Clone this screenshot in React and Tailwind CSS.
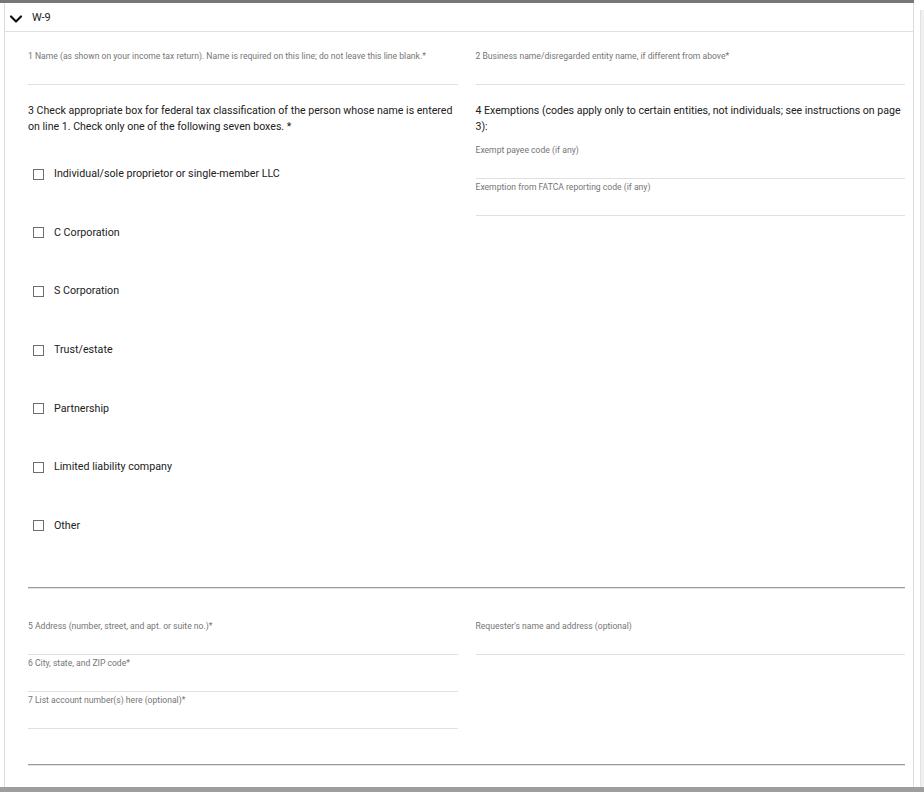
import React from "react";
import { ChevronDown } from "lucide-react";

function Field({ label }) {
  return (
    <div className="pt-[3px]">
      <div className="text-[8.6px] leading-[10px] text-[#757575] whitespace-nowrap">{label}</div>
      <div className="h-[24px] border-b border-[#e0e0e0]" />
    </div>
  );
}

function Option({ label }) {
  return (
    <div className="h-[58.6px] flex items-center pl-[5px]">
      <div className="w-[11px] h-[11px] border-[1.5px] border-[#6e6e6e] bg-white" />
      <span className="ml-[10px] text-[10.7px] leading-[16px] text-[#212121]">{label}</span>
    </div>
  );
}

function Divider() {
  return (
    <div className="h-[2px] border-t border-[#9a9a9a] border-b border-b-[#e4e4e4]" />
  );
}

export default function App() {
  const options = [
    "Individual/sole proprietor or single-member LLC",
    "C Corporation",
    "S Corporation",
    "Trust/estate",
    "Partnership",
    "Limited liability company",
    "Other",
  ];
  return (
    <div className="w-[924px] h-[792px] bg-white flex flex-col font-['Roboto',sans-serif] overflow-hidden">
      <div className="flex flex-1 min-h-0">
        <div className="w-[914px] flex flex-col">
          <div className="h-[3px] w-[914px] bg-[#777777]" />
          <div className="flex-1 ml-[4px] border-l border-r border-[#dcdcdc] flex flex-col">
            <div className="h-[29px] border-b border-[#e0e0e0] flex items-center pl-[1px] pt-[3px]">
              <ChevronDown size={20} strokeWidth={2.6} color="#111" />
              <span className="ml-[6px] text-[11px] text-[#212121]">W-9</span>
            </div>
            <div className="pl-[23px] pr-[8px] pt-[16px]">
              <div className="grid grid-cols-2 gap-x-[18px]">
                <div>
                  <Field label="1 Name (as shown on your income tax return). Name is required on this line; do not leave this line blank.*" />
                  <div className="mt-[18px] text-[10.6px] leading-[16px] text-[#212121]">
                    3 Check appropriate box for federal tax classification of the person whose name is entered on line 1. Check only one of the following seven boxes. *
                  </div>
                  <div className="mt-[10px]">
                    {options.map((o) => (
                      <Option key={o} label={o} />
                    ))}
                  </div>
                </div>
                <div>
                  <Field label="2 Business name/disregarded entity name, if different from above*" />
                  <div className="mt-[18px] text-[10.6px] leading-[16px] text-[#212121] tracking-[-0.02px]">
                    4 Exemptions (codes apply only to certain entities, not individuals; see instructions on page 3):
                  </div>
                  <div className="mt-[7px]">
                    <Field label="Exempt payee code (if any)" />
                    <Field label="Exemption from FATCA reporting code (if any)" />
                  </div>
                </div>
              </div>
              <div className="mt-[32px]">
                <Divider />
              </div>
              <div className="grid grid-cols-2 gap-x-[18px] mt-[29px]">
                <div>
                  <Field label="5 Address (number, street, and apt. or suite no.)*" />
                  <Field label="6 City, state, and ZIP code*" />
                  <Field label="7 List account number(s) here (optional)*" />
                </div>
                <div>
                  <Field label="Requester's name and address (optional)" />
                </div>
              </div>
              <div className="mt-[35px]">
                <Divider />
              </div>
            </div>
          </div>
        </div>
        <div className="w-[6px]" />
        <div className="w-[4px] mt-[10px] bg-[#f0f0f0] border-l border-[#e2e2e2]" />
      </div>
      <div className="h-[5px] bg-[#9e9e9e]" />
    </div>
  );
}
